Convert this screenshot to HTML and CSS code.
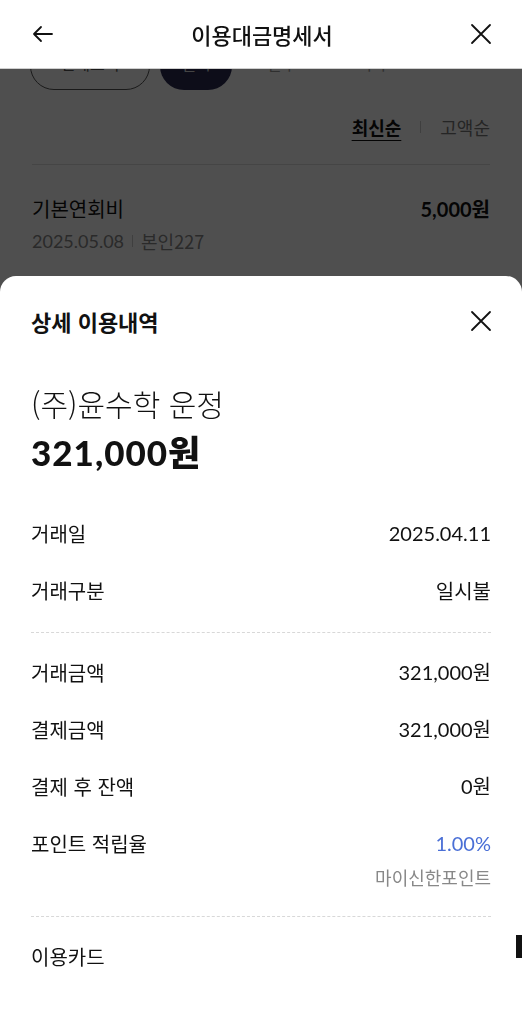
FILE: index.html
```html
<!DOCTYPE html>
<html lang="ko">
<head>
  <meta charset="UTF-8" />
  <title>이용대금명세서</title>
  <link rel="stylesheet" href="styles.css">
</head>
<body>
  <header class="topbar">
    <svg class="icon back" width="24" height="24" viewBox="0 0 24 24">
      <path d="M21 12H3M10 5l-7 7 7 7" fill="none" stroke="#111" stroke-width="1.8" stroke-linecap="round" stroke-linejoin="round"/>
    </svg>
    <h1>이용대금명세서</h1>
    <svg class="icon close" width="24" height="24" viewBox="0 0 24 24">
      <path d="M3 3l18 18M21 3L3 21" fill="none" stroke="#111" stroke-width="1.8" stroke-linecap="round"/>
    </svg>
  </header>

  <main class="page">
    <div class="chips">
      <span class="chip outline">전체보기</span>
      <span class="chip dark">일시</span>
      <span class="chip plain">할부</span>
      <span class="chip plain">기타</span>
    </div>
    <div class="sort">
      <span class="sort-on">최신순</span>
      <span class="sort-bar"></span>
      <span class="sort-off">고액순</span>
    </div>
    <div class="item">
      <div class="item-top">
        <span>기본연회비</span>
        <span class="num strong">5,000원</span>
      </div>
      <div class="item-sub">
        <span class="num">2025.05.08</span>
        <span class="sub-bar"></span>
        <span>본인227</span>
      </div>
    </div>
  </main>

  <div class="dim"></div>

  <!-- 상세 이용내역 바텀시트 -->
  <section class="sheet">
    <div class="sheet-head">
      <h2>상세 이용내역</h2>
      <svg class="icon" width="24" height="24" viewBox="0 0 24 24">
        <path d="M3 3l18 18M21 3L3 21" fill="none" stroke="#111" stroke-width="1.8" stroke-linecap="round"/>
      </svg>
    </div>
    <div class="merchant">(주)윤수학 운정</div>
    <div class="amount num">321,000원</div>

    <div class="group first">
      <div class="row"><span>거래일</span><span class="num">2025.04.11</span></div>
      <div class="row"><span>거래구분</span><span>일시불</span></div>
    </div>
    <div class="group">
      <div class="row"><span>거래금액</span><span class="num">321,000원</span></div>
      <div class="row"><span>결제금액</span><span class="num">321,000원</span></div>
      <div class="row"><span>결제 후 잔액</span><span class="num">0원</span></div>
      <div class="row point">
        <span>포인트 적립율</span>
        <div class="point-val">
          <span class="num blue">1.00%</span>
          <span class="point-sub">마이신한포인트</span>
        </div>
      </div>
    </div>
    <div class="group last">
      <div class="row"><span>이용카드</span><span class="card-edge"></span></div>
    </div>
  </section>
</body>
</html>
```

FILE: styles.css
```css
body {
  margin: 0;
  font-family: "Noto Sans CJK KR", sans-serif;
  color: #111;
  background: #fff;
  overflow: hidden;
}
.num {
  font-family: Lato, "Noto Sans CJK KR", sans-serif;
}

/* 상단 바 */
.topbar {
  position: fixed;
  top: 0;
  left: 0;
  right: 0;
  z-index: 3;
  height: 69px;
  background: #fff;
  border-bottom: 1px solid #cfcfcf;
  display: flex;
  align-items: center;
  justify-content: space-between;
  padding: 0 29px 0 31px;
  box-sizing: border-box;
}
.topbar h1 {
  margin: 0;
  font-size: 22px;
  font-weight: 500;
}
.icon {
  display: block;
}

/* 뒤쪽 목록 */
.page {
  padding: 42px 32px 0 30px;
}
.chips {
  display: flex;
  align-items: center;
  gap: 10px;
}
.chip {
  height: 48px;
  box-sizing: border-box;
  border-radius: 24px;
  display: flex;
  align-items: center;
  justify-content: center;
  padding-bottom: 6px;
  font-size: 16px;
  color: #555;
}
.chip.outline {
  width: 120px;
  border: 1px solid #555;
}
.chip.dark {
  width: 72px;
  background: #2a2a52;
  color: #ddd;
}
.chip.plain {
  width: 80px;
  color: #999;
}
.sort {
  display: flex;
  justify-content: flex-end;
  align-items: center;
  gap: 19px;
  height: 74px;
  border-bottom: 1px solid #ddd;
  font-size: 18px;
  margin-left: 2px;
}
.sort-on {
  font-weight: 700;
  text-decoration: underline;
  text-underline-offset: 5px;
}
.sort-bar, .sub-bar {
  width: 1px;
  height: 12px;
  background: #ccc;
}
.sort-off {
  color: #777;
}
.item {
  padding: 29px 0 0 2px;
}
.item-top {
  display: flex;
  justify-content: space-between;
  font-size: 20px;
  line-height: 30px;
}
.strong {
  font-weight: 700;
}
.item-sub {
  display: flex;
  align-items: center;
  gap: 8px;
  margin-top: 4px;
  font-size: 18px;
  color: #888;
}

/* 딤 처리 */
.dim {
  position: fixed;
  inset: 0;
  z-index: 1;
  background: rgba(0, 0, 0, 0.69);
}

/* 바텀시트 */
.sheet {
  position: fixed;
  top: 276px;
  left: 0;
  right: 0;
  bottom: 0;
  z-index: 2;
  background: #fff;
  border-radius: 16px 16px 0 0;
  padding: 0 31px;
}
.sheet-head {
  display: flex;
  justify-content: space-between;
  align-items: center;
  padding-top: 30px;
  height: 30px;
  margin-right: -2px;
}
.sheet-head h2 {
  margin: 0;
  font-size: 22px;
  font-weight: 700;
}
.merchant {
  margin-top: 47px;
  font-size: 30px;
  font-weight: 300;
  line-height: 40px;
}
.amount {
  margin-top: 8px;
  font-size: 35px;
  font-weight: 900;
  letter-spacing: 1px;
  line-height: 42px;
}
.group {
  padding: 11px 0 13px;
  border-bottom: 1px dashed #d8d8d8;
}
.group.first {
  margin-top: 21px;
}
.group.last {
  border-bottom: none;
}
.row {
  display: flex;
  justify-content: space-between;
  align-items: flex-start;
  font-size: 20px;
  line-height: 29px;
  padding: 14px 0;
}
.point-val {
  display: flex;
  flex-direction: column;
  align-items: flex-end;
}
.blue {
  color: #4a6fd6;
}
.point-sub {
  margin-top: 7px;
  font-size: 18px;
  line-height: 24px;
  color: #888;
}
.card-edge {
  width: 6px;
  height: 23px;
  margin: -7px -31px 0 0;
  background: #111;
}
```
